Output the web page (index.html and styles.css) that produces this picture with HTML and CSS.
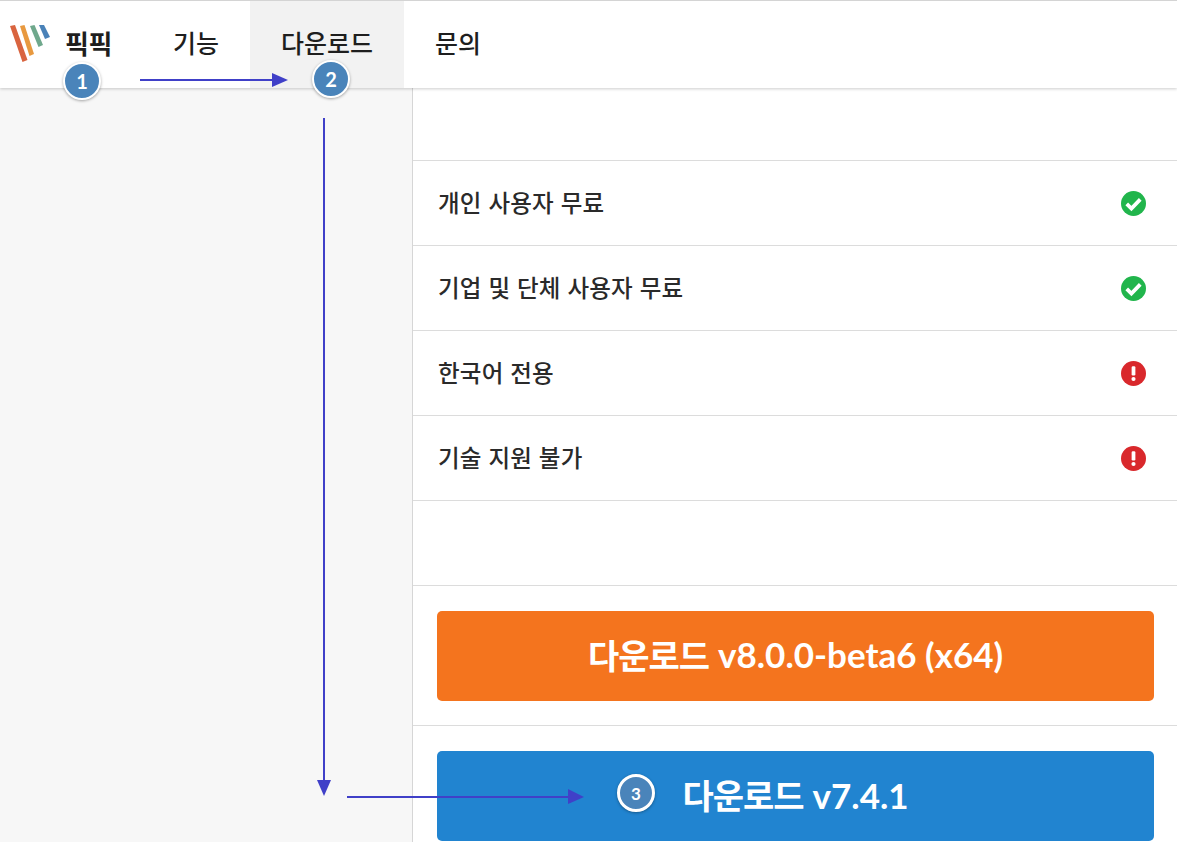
FILE: index.html
```html
<!DOCTYPE html>
<html lang="ko">
<head>
<meta charset="utf-8">
<title>픽픽 다운로드</title>
<link rel="stylesheet" href="styles.css">
</head>
<body>
<div class="page">
  <header class="nav">
    <a class="brand">
      <svg class="logo" width="41" height="38" viewBox="0 0 41 38">
        <polygon points="0,1 5,0 17.500,35 12.500,37" fill="#d9643f"/>
        <polygon points="10,1 14.500,0 24,29 19.500,31" fill="#e8993f"/>
        <polygon points="20,1 24.500,0 33,20 28.500,22" fill="#6fa88c"/>
        <polygon points="29,0 34,0 40,12 35,14" fill="#4a82b8"/>
      </svg>
      <span class="brand-name">픽픽</span>
    </a>
    <a class="nav-item">기능</a>
    <a class="nav-item active">다운로드</a>
    <a class="nav-item">문의</a>
  </header>
  <div class="main">
    <aside class="side"></aside>
    <section class="content">
      <div class="row blank first"></div>
      <div class="row"><span>개인 사용자 무료</span>
        <svg class="st" viewBox="0 0 24 24"><circle cx="12" cy="12" r="12" fill="#21b54c"/><path d="M5.500 12.300l4.500 4.500 8.500-8.800" fill="none" stroke="#fff" stroke-width="3.600"/></svg></div>
      <div class="row"><span>기업 및 단체 사용자 무료</span>
        <svg class="st" viewBox="0 0 24 24"><circle cx="12" cy="12" r="12" fill="#21b54c"/><path d="M5.500 12.300l4.500 4.500 8.500-8.800" fill="none" stroke="#fff" stroke-width="3.600"/></svg></div>
      <div class="row"><span>한국어 전용</span>
        <svg class="st" viewBox="0 0 24 24"><circle cx="12" cy="12" r="12" fill="#d9282c"/><rect x="10.200" y="5" width="3.600" height="9" rx="1.200" fill="#fff"/><circle cx="12" cy="17.300" r="2" fill="#fff"/></svg></div>
      <div class="row"><span>기술 지원 불가</span>
        <svg class="st" viewBox="0 0 24 24"><circle cx="12" cy="12" r="12" fill="#d9282c"/><rect x="10.200" y="5" width="3.600" height="9" rx="1.200" fill="#fff"/><circle cx="12" cy="17.300" r="2" fill="#fff"/></svg></div>
      <div class="row blank"></div>
      <div class="row btn-row"><a class="btn orange"><b>다운로드</b> v8.0.0-beta6 (x64)</a></div>
      <div class="row btn-row last"><a class="btn blue"><b>다운로드</b> v7.4.1</a></div>
    </section>
  </div>

  <svg class="arrows" width="1177" height="842" viewBox="0 0 1177 842">
    <g fill="#4040c8">
      <rect x="140" y="79" width="136" height="2"/>
      <polygon points="272,73 288,80 272,87"/>
      <rect x="323" y="118" width="2" height="666"/>
      <polygon points="317,780 331,780 324,796"/>
      <rect x="347" y="796" width="226" height="2"/>
      <polygon points="568,789 584,797 568,804"/>
    </g>
  </svg>
  <span class="badge b1">1</span>
  <span class="badge b2">2</span>
  <span class="badge b3">3</span>
</div>
</body>
</html>
```
FILE: styles.css
```css
* { box-sizing: border-box; }
html, body { margin: 0; padding: 0; height: 100%; overflow: hidden; background: #fff; }
body { font-family: "Noto Sans CJK KR", "Noto Sans", sans-serif; color: #222; }
.page { position: relative; width: 1177px; height: 842px; overflow: hidden; }
.nav {
  display: flex; height: 88px; border-top: 1px solid #d4d4d4; background: #fff;
  box-shadow: 0 1px 3px rgba(0,0,0,.2); position: relative; z-index: 1;
}
.brand { width: 142px; display: flex; align-items: center; padding-left: 10px; gap: 14px; }
.logo { flex: none; width: 41px; height: 38px; margin-top: -1px; }
.brand-name { font-size: 26px; font-weight: 700; color: #1e1e1e; letter-spacing: -.5px; margin-top: -4px; }
.nav-item { display: flex; align-items: center; padding: 0 31px 5px; font-size: 25px; font-weight: 500; color: #1e1e1e; }
.nav-item.active { background: #f2f2f2; }
.main { display: flex; height: 754px; }
.side { width: 413px; flex: none; background: #f7f7f7; border-right: 1px solid #d6d6d6; }
.content { flex: 1; min-width: 0; }
.row {
  height: 85px; border-bottom: 1px solid #dcdcdc; display: flex; align-items: center;
  justify-content: space-between; padding: 0 31px 0 25px; font-size: 23.500px; font-weight: 500; color: #2a2a2a;
}
.row span { letter-spacing: .2px; margin-top: -3px; }
.first { height: 73px; }
.st { width: 25px; height: 25px; flex: none; }
.btn-row { height: 140px; padding: 0 23px 0 24px; }
.last { border-bottom: 0; align-items: flex-start; padding-top: 25px; }
.btn {
  flex: 1; height: 90px; border-radius: 5px; color: #fff; display: flex; align-items: center; justify-content: center;
  font-family: "Lato", "Noto Sans CJK KR", sans-serif; font-size: 35px; font-weight: 700; gap: 9px; padding-bottom: 3px;
}
.btn b { font-family: "Noto Sans CJK KR", sans-serif; font-size: 34px; font-weight: 700; letter-spacing: -1px; }
.orange { background: #f4741e; }
.blue { background: #2184d0; }
.arrows { position: absolute; left: 0; top: 0; z-index: 2; pointer-events: none; }
.badge {
  position: absolute; z-index: 3; width: 38px; height: 38px; border-radius: 50%;
  background: #4a84ba; border: 2px solid #fff; color: #fff; font-family: "Lato", sans-serif; font-size: 20px; font-weight: 700;
  display: flex; align-items: center; justify-content: center; box-shadow: 0 1px 3px rgba(0,0,0,.35);
}
.b1 { left: 63px; top: 62px; }
.b2 { left: 312px; top: 60px; }
.b3 { left: 617px; top: 774px; font-size: 17px; border-width: 3px; }
```
